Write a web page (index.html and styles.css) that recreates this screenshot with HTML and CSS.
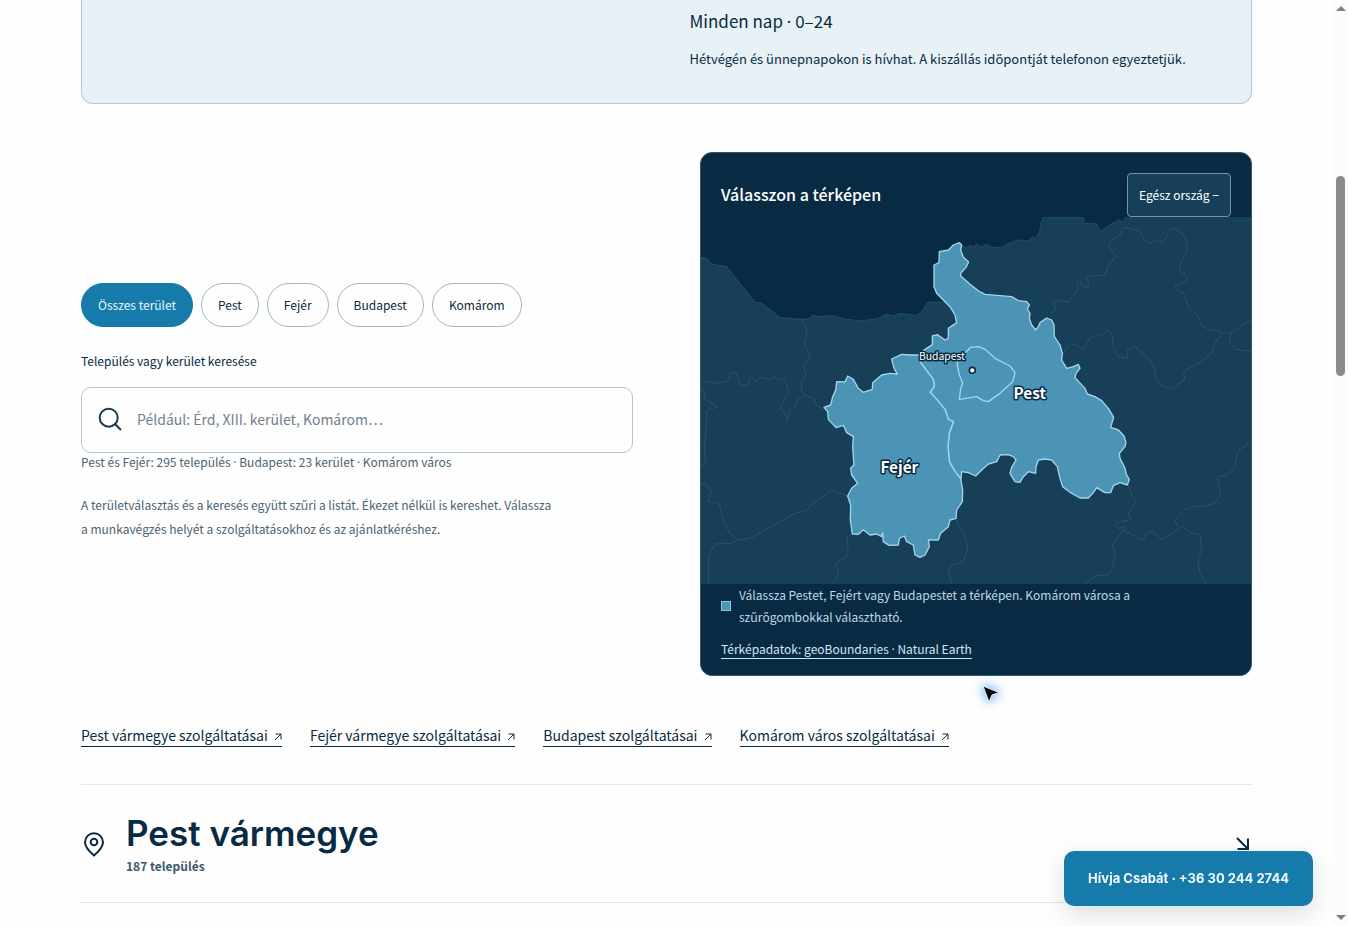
FILE: index.html
```html
<!DOCTYPE html>
<html lang="hu">
<head>
<meta charset="utf-8">
<meta name="viewport" content="width=device-width, initial-scale=1">
<title>Szolgáltatási terület</title>
<link rel="stylesheet" href="styles.css">
</head>
<body>
<main class="page">
  <section class="hours">
    <div class="hours-body">
      <p class="hours-time">Minden nap <span class="dot">·</span> 0–24</p>
      <p class="hours-note">Hétvégén és ünnepnapokon is hívhat. A kiszállás időpontját telefonon egyeztetjük.</p>
    </div>
  </section>

  <section class="finder">
    <div class="filter">
      <div class="pills">
        <button type="button" class="pill pill-active">Összes terület</button>
        <button type="button" class="pill">Pest</button>
        <button type="button" class="pill">Fejér</button>
        <button type="button" class="pill">Budapest</button>
        <button type="button" class="pill">Komárom</button>
      </div>
      <label class="search-label" for="place">Település vagy kerület keresése</label>
      <div class="search">
        <svg class="search-icon" viewBox="0 0 24 24" aria-hidden="true"><circle cx="10.700" cy="10.700" r="9"/><path d="M17.200 17.200 23 23"/></svg>
        <input class="search-input" id="place" type="text" placeholder="Például: Érd, XIII. kerület, Komárom…">
      </div>
      <p class="search-hint">Pest és Fejér: 295 település <span class="dot">·</span> Budapest: 23 kerület <span class="dot">·</span> Komárom város</p>
      <p class="filter-help">A területválasztás és a keresés együtt szűri a listát. Ékezet nélkül is kereshet. Válassza a munkavégzés helyét a szolgáltatásokhoz és az ajánlatkéréshez.</p>
    </div>

    <div class="panel">
      <div class="panel-head">
        <h2 class="panel-title">Válasszon a térképen</h2>
        <button type="button" class="zoom-out">Egész ország −</button>
      </div>
      <svg class="map" viewBox="33 231 1650 1101" role="img" aria-label="Pest, Fejér és Budapest térképe">
        <path class="land" d="M30 352 50 355 65 372 110 380 195 487 215 489 270 533 330 538 355 537 370 526 385 530 430 527 460 537 515 543 565 535 590 522 610 528 630 520 680 527 700 510 712 487 765 487 790 440 810 315 830 322 840 315 850 322 860 312 875 322 890 313 905 322 935 322 960 308 985 300 1015 302 1030 290 1037 298 1050 270 1052 250 1060 232 1180 232 1183 250 1205 250 1220 252 1230 275 1260 255 1285 240 1300 245 1310 229 1690 229 1690 1340 30 1340Z"/>
        <g class="border">
          <path d="M335 540 348 565 350 590 343 612 352 630 360 655 340 675 345 695 348 705 333 730 335 752 345 768"/>
          <path d="M30 722 85 730 115 722 122 700 138 698 150 735 175 735 178 715 190 712 197 725 212 712 240 720 252 710 265 722 285 714 295 755 270 805 285 820 292 845 300 810 320 795 320 780 345 766 370 776 378 795 402 808"/>
          <path d="M33 740 45 760 40 775 83 800 50 812 48 880 42 920 48 965 30 982"/>
          <path d="M30 1030 50 1035 64 1055 53 1083 88 1092 100 1140 118 1178 143 1200 180 1195 320 1117 345 1115 365 1093 425 1050 471 1067"/>
          <path d="M56 1335 56 1250 75 1212 125 1210 143 1200"/>
          <path d="M485 1182 470 1195 475 1220 468 1252 440 1265 437 1280 445 1290 442 1315 420 1335"/>
          <path d="M800 1138 805 1155 822 1180 834 1225 820 1265 785 1275 774 1295 788 1335"/>
          <path d="M1080 527 1096 505 1090 485 1110 482 1135 487 1152 465 1165 447 1160 430 1172 425 1180 440 1195 442 1195 427 1188 410 1220 405 1245 408 1255 375 1278 350 1256 318 1260 305 1290 285 1300 262 1315 265 1350 272 1362 300 1375 310 1390 305 1400 298 1420 308 1430 290 1440 268 1455 266 1475 278 1493 310 1488 340 1468 380 1473 395 1493 413 1485 425 1455 440 1460 450 1480 457 1495 500 1525 530 1535 558 1560 570 1585 573 1600 580 1625 578 1690 535"/>
          <path d="M1118 645 1130 620 1155 612 1180 628 1205 588 1230 588 1255 570 1265 585 1270 620 1285 650 1312 655 1312 630 1335 618 1350 635 1380 660 1395 690 1400 725 1420 740 1445 746 1485 718 1480 700 1490 688 1530 668 1565 640 1575 610 1595 580"/>
          <path d="M1625 578 1618 605 1635 628 1690 635"/>
          <path d="M1316 1035 1325 1065 1340 1082 1325 1105 1315 1125 1325 1138 1295 1145 1277 1152 1285 1165 1305 1162 1300 1170 1340 1192 1358 1202 1370 1180 1385 1174 1400 1185 1415 1198 1435 1188 1460 1170 1475 1156 1500 1178 1530 1184 1535 1230 1523 1260 1530 1300 1550 1335"/>
          <path d="M1300 1170 1267 1215 1275 1240 1268 1285 1250 1308 1220 1305 1180 1335"/>
          <path d="M1462 1160 1455 1140 1485 1108 1515 1100 1540 1098 1575 1090 1592 1060 1582 1010 1610 1005 1635 980 1642 940 1655 925 1690 900"/>
        </g>
        <g class="county">
          <path d="M808 308 815 315 812 330 820 352 836 366 828 382 812 400 812 408 840 433 866 453 885 463 965 470 985 482 1010 485 1018 495 1012 507 1020 520 1018 535 1025 555 1037 570 1045 560 1050 548 1070 534 1085 540 1092 555 1093 590 1110 615 1117 640 1115 660 1130 685 1150 680 1165 673 1170 685 1158 700 1155 712 1168 727 1185 745 1192 762 1215 770 1235 782 1255 805 1271 832 1262 862 1285 870 1302 888 1308 908 1305 920 1288 940 1290 955 1305 985 1310 1005 1318 1018 1312 1035 1290 1028 1270 1037 1262 1058 1245 1058 1220 1043 1210 1058 1195 1074 1170 1074 1140 1057 1118 1040 1110 1015 1102 980 1085 960 1065 957 1045 960 1038 980 1037 1000 1015 995 1000 1010 990 1027 975 1025 960 1000 965 982 978 960 970 950 955 944 930 945 920 965 895 972 875 990 857 1008 835 998 815 995 813 1016 795 995 778 965 774 920 778 880 790 845 775 838 765 808 735 772 720 756 733 740 730 718 705 685 692 668 690 650 700 632 727 614 727 588 742 584 765 600 775 595 775 565 800 548 795 525 780 500 765 485 740 460 732 440 732 375 747 368 748 335 775 330 790 315Z"/>
          <path d="M692 645 660 645 635 643 605 657 612 685 622 702 600 700 575 705 548 728 547 748 520 757 505 745 490 718 473 708 465 726 440 725 437 750 428 770 422 795 402 802 413 815 415 838 438 863 460 856 470 878 490 890 488 920 492 975 482 985 485 1005 503 1030 485 1045 473 1068 482 1095 481 1140 487 1182 505 1183 520 1169 540 1185 560 1182 575 1190 578 1178 580 1205 597 1216 625 1215 628 1195 643 1188 650 1205 670 1215 675 1245 690 1252 705 1245 718 1220 715 1200 745 1200 752 1180 775 1160 780 1140 798 1135 800 1110 817 1085 818 1050 812 1016 795 995 778 965 774 920 778 880 790 845 775 838 765 808 735 772 720 756 733 740 730 718 705 685 692 668Z"/>
          <path d="M826 638 842 622 866 620 885 628 915 655 960 678 975 698 968 725 930 760 895 785 880 782 860 770 808 778 812 745 818 730 808 705 802 675 805 655Z"/>
        </g>
        <circle class="pin" cx="847" cy="691" r="9"/>
        <g class="map-text">
          <text class="city" x="756" y="660">Budapest</text>
          <text class="region" x="1019" y="777">Pest</text>
          <text class="region" x="628" y="999">Fejér</text>
        </g>
      </svg>
      <div class="panel-foot">
        <p class="legend"><span class="swatch"></span><span>Válassza Pestet, Fejért vagy Budapestet a térképen. Komárom városa a szűrőgombokkal választható.</span></p>
        <a class="credits" href="#adatok">Térképadatok: geoBoundaries <span class="dot">·</span> Natural Earth</a>
      </div>
    </div>
  </section>

  <nav class="services">
    <a class="service" href="#pest">Pest vármegye szolgáltatásai <svg class="out" viewBox="0 0 8 8" aria-hidden="true"><path d="M1.500 1H7V6.500M7 1 1 7"/></svg></a>
    <a class="service" href="#fejer">Fejér vármegye szolgáltatásai <svg class="out" viewBox="0 0 8 8" aria-hidden="true"><path d="M1.500 1H7V6.500M7 1 1 7"/></svg></a>
    <a class="service" href="#budapest">Budapest szolgáltatásai <svg class="out" viewBox="0 0 8 8" aria-hidden="true"><path d="M1.500 1H7V6.500M7 1 1 7"/></svg></a>
    <a class="service" href="#komarom">Komárom város szolgáltatásai <svg class="out" viewBox="0 0 8 8" aria-hidden="true"><path d="M1.500 1H7V6.500M7 1 1 7"/></svg></a>
  </nav>

  <section class="area" id="pest">
    <svg class="area-pin" viewBox="0 0 26 26" aria-hidden="true"><path d="M13 24.500C8 20.200 4 16 4 11.200a9 9 0 0 1 18 0C22 16 18 20.200 13 24.500Z"/><circle cx="13" cy="11" r="3.300"/></svg>
    <div class="area-text">
      <h3 class="area-name">Pest vármegye</h3>
      <p class="area-count">187 település</p>
    </div>
    <svg class="area-arrow" viewBox="0 0 18 18" aria-hidden="true"><path d="M3 3 14 14M14 3.500V14H3.500"/></svg>
  </section>
</main>

<a class="call" href="tel:+36302442744">Hívja Csabát · +36 30 244 2744</a>

<div class="scrollbar" aria-hidden="true">
  <span class="scroll-up"></span>
  <span class="scroll-thumb"></span>
  <span class="scroll-down"></span>
</div>

<svg class="cursor" viewBox="0 0 20 20" aria-hidden="true"><path d="M2 2 18 8.500 11 11 8 18Z"/></svg>
</body>
</html>
```
FILE: styles.css
```css
:root {
  --ink: #082b43;
  --muted: #4b6373;
  --blue: #167bab;
  --line: #b2c7d1;
  --sans: "Noto Sans CJK SC", "Noto Sans", sans-serif;
  --display: Inter, "Noto Sans", sans-serif;
}

* { box-sizing: border-box; }

body {
  margin: 0;
  height: 100vh;
  padding-right: 15px;
  overflow: hidden;
  background: #fefefe;
  color: var(--ink);
  font-family: var(--sans);
  font-size: 14px;
}

p, h2, h3 { margin: 0; }

button, input { font: inherit; color: inherit; }

.dot {
  font-family: "Noto Sans", sans-serif;
  line-height: 1;
}

.page { padding: 0 81px; }

.hours {
  display: grid;
  grid-template-columns: 1fr 1fr;
  padding: 4px 32px 32px;
  background: #e8f1f6;
  border: 1px solid var(--line);
  border-top: 0;
  border-radius: 0 0 12px 12px;
}

.hours-body {
  grid-column: 2;
  padding-left: 23px;
}

.hours-time {
  font-size: 17px;
  line-height: 34px;
}

.hours-note {
  margin-top: 9px;
  font-size: 13px;
  line-height: 24px;
  white-space: nowrap;
}

.finder {
  display: grid;
  grid-template-columns: 1fr 1fr;
  gap: 67px;
  align-items: center;
  margin-top: 48px;
}

.pills {
  display: flex;
  flex-wrap: wrap;
  gap: 8px;
}

.pill {
  height: 44px;
  padding: 0 16px 2px;
  border: 1px solid #a0b8c3;
  border-radius: 22px;
  background: none;
  font-size: 12px;
}

.pill-active {
  border-color: var(--blue);
  background: var(--blue);
  color: #e8f5fb;
}

.search-label {
  display: block;
  margin-top: 24px;
  font-size: 12px;
  line-height: 20px;
}

.search {
  display: flex;
  align-items: center;
  gap: 15px;
  height: 66px;
  margin-top: 16px;
  padding: 0 16px 3px;
  border: 1px solid var(--line);
  border-radius: 10px;
}

.search-icon {
  width: 24px;
  height: 24px;
  fill: none;
  stroke: #173850;
  stroke-width: 2;
}

.search-input {
  flex: 1;
  min-width: 0;
  padding: 0;
  border: 0;
  outline: 0;
  background: none;
  font-size: 14px;
}

.search-input::placeholder { color: #71808a; }

.search-hint {
  color: var(--muted);
  font-size: 12px;
  line-height: 18px;
}

.filter-help {
  max-width: 476px;
  margin: 22px 0 4px;
  color: var(--muted);
  font-size: 12px;
  line-height: 24px;
}

.panel {
  overflow: hidden;
  border: 1px solid #35566b;
  border-radius: 12px;
  background: #082b43;
  color: #fff;
}

.panel-head {
  display: flex;
  align-items: center;
  justify-content: space-between;
  padding: 20px 20px 0;
}

.panel-title {
  padding-bottom: 3px;
  font-size: 16px;
  font-weight: 500;
  line-height: 24px;
}

.zoom-out {
  height: 44px;
  padding: 0 11px 2px;
  border: 1px solid #7694a6;
  border-radius: 4px;
  background: #173f58;
  font-size: 12px;
}

.map {
  display: block;
  width: 100%;
}

.land {
  fill: #173f58;
  stroke: #22505f;
  stroke-width: 3;
}

.border {
  fill: none;
  stroke: #265665;
  stroke-width: 3;
  stroke-linejoin: round;
}

.county {
  fill: #4b94b6;
  stroke: #a3d5ec;
  stroke-width: 4;
  stroke-linejoin: round;
}

.pin {
  fill: #fff;
  stroke: #082b43;
  stroke-width: 5;
}

.map-text {
  fill: #fff;
  stroke: #082b43;
  stroke-width: 9;
  stroke-linejoin: round;
  paint-order: stroke;
  text-anchor: middle;
}

.city { font-size: 31px; }

.region {
  font-size: 46px;
  font-weight: 700;
}

.panel-foot {
  padding: 0 20px 15px;
  font-size: 12px;
  line-height: 22px;
}

.legend {
  display: flex;
  align-items: center;
  gap: 8px;
  max-width: 440px;
  color: #c1d7e4;
}

.swatch {
  flex: none;
  width: 10px;
  height: 10px;
  border: 1px solid #8fc3dc;
  background: #4b94b6;
}

.credits {
  display: inline-block;
  margin-top: 12px;
  border-bottom: 1px solid #c9e6f5;
  color: #d3e6f1;
  line-height: 18px;
  text-decoration: none;
}

.services {
  display: flex;
  flex-wrap: wrap;
  gap: 28px;
  margin-top: 49px;
}

.service {
  border-bottom: 1px solid var(--ink);
  color: var(--ink);
  font-size: 14px;
  line-height: 21px;
  text-decoration: none;
}

.out {
  width: 8px;
  height: 8px;
  margin-left: 3px;
  fill: none;
  stroke: var(--ink);
}

.area {
  display: flex;
  align-items: center;
  gap: 19px;
  height: 119px;
  margin-top: 37px;
  border-top: 1px solid #e2e9ed;
  border-bottom: 1px solid #dbe4e8;
}

.area-pin {
  width: 26px;
  height: 26px;
  fill: none;
  stroke: var(--ink);
  stroke-width: 2;
}

.area-text {
  flex: 1;
  padding-bottom: 2px;
}

.area-name {
  font-family: var(--display);
  font-size: 35px;
  font-weight: 600;
  line-height: 46px;
}

.area-count {
  color: #3d586b;
  font-size: 12px;
  font-weight: 700;
  line-height: 20px;
}

.area-arrow {
  width: 18px;
  height: 18px;
  fill: none;
  stroke: var(--ink);
  stroke-width: 2;
}

.call {
  position: fixed;
  right: 35px;
  bottom: 20px;
  padding: 16px 24px;
  border-radius: 10px;
  background: var(--blue);
  box-shadow: 0 8px 24px rgba(8, 43, 67, .15);
  color: #f2fafe;
  font-family: var(--display);
  font-size: 13px;
  font-weight: 700;
  line-height: 23px;
  text-decoration: none;
}

.scrollbar {
  position: fixed;
  top: 0;
  right: 0;
  bottom: 0;
  width: 15px;
  background: #fcfcfc;
}

.scroll-up,
.scroll-down {
  position: absolute;
  left: 3px;
  border: 5px solid transparent;
}

.scroll-up {
  top: 1px;
  border-bottom-color: #808080;
}

.scroll-down {
  bottom: 1px;
  border-top-color: #808080;
}

.scroll-thumb {
  position: absolute;
  top: 176px;
  left: 3px;
  width: 9px;
  height: 200px;
  border-radius: 5px;
  background: #8b8b8b;
}

.cursor {
  position: absolute;
  top: 684px;
  left: 981px;
  width: 20px;
  height: 20px;
  fill: #050505;
  stroke: #eee;
  stroke-width: 1;
  filter: drop-shadow(0 0 3px #8cc2ff) drop-shadow(0 0 6px #8cc2ff);
}
```
